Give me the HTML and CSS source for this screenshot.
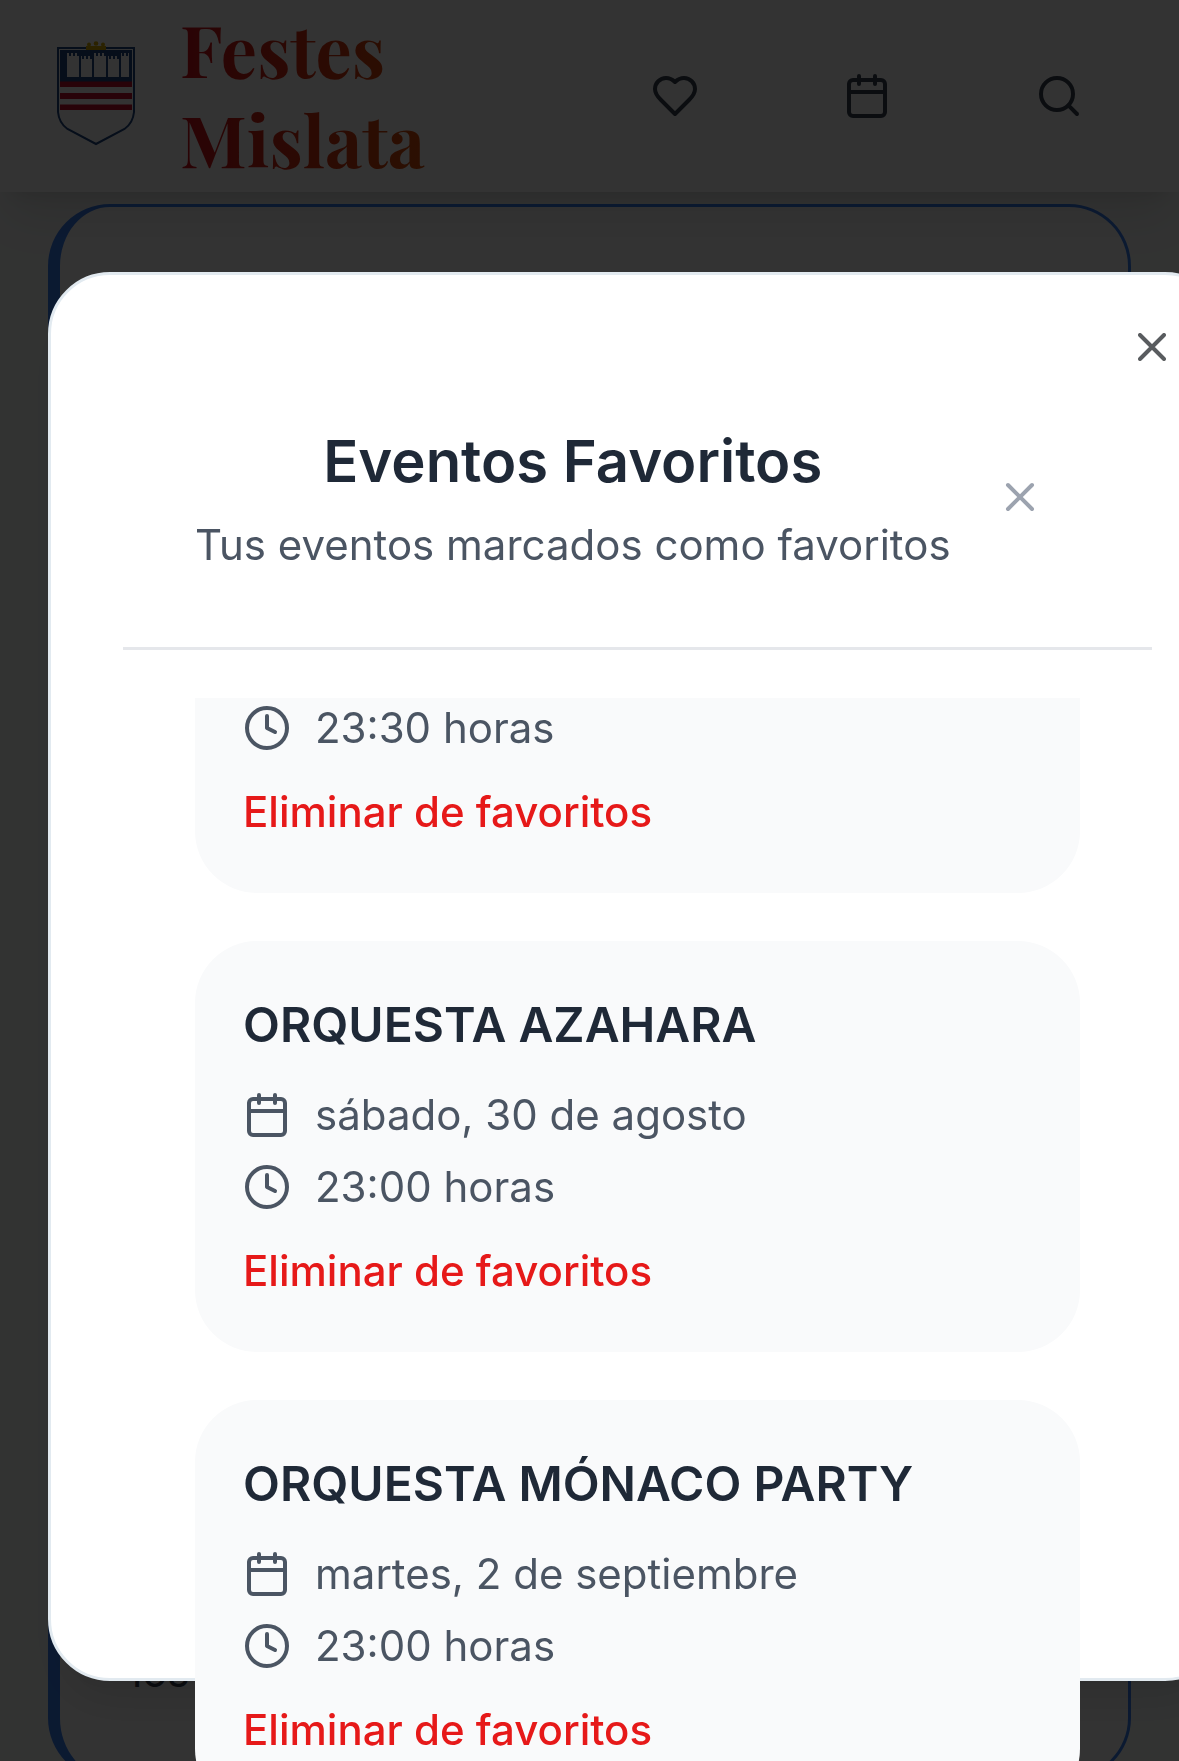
FILE: index.html
```html
<!DOCTYPE html>
<html lang="es">
<head>
<meta charset="utf-8">
<meta name="viewport" content="width=device-width, initial-scale=1">
<title>Festes Mislata</title>
<link rel="stylesheet" href="styles.css">
</head>
<body>
<svg class="sprite" aria-hidden="true">
  <symbol id="calendar" viewBox="0 0 24 24"><path d="M8 2v4M16 2v4M3 10h18"/><rect x="3" y="4" width="18" height="18" rx="2"/></symbol>
  <symbol id="clock" viewBox="0 0 24 24"><circle cx="12" cy="12" r="10"/><path d="M12 6v6l4 2"/></symbol>
  <symbol id="close" viewBox="0 0 24 24"><path d="M18 6 6 18M6 6l12 12"/></symbol>
  <symbol id="heart" viewBox="0 0 24 24"><path d="M19 14c1.49-1.46 3-3.21 3-5.5A5.5 5.5 0 0 0 16.5 3c-1.76 0-3 .5-4.5 2-1.5-1.5-2.74-2-4.5-2A5.5 5.5 0 0 0 2 8.500c0 2.300 1.500 4.050 3 5.500l7 7Z"/></symbol>
  <symbol id="search" viewBox="0 0 24 24"><circle cx="11" cy="11" r="8"/><path d="m21 21-4.300-4.300"/></symbol>
</svg>

<header class="site-header">
  <a class="brand" href="#">
    <svg class="crest" viewBox="0 0 96 120" aria-hidden="true">
      <path d="M10 12H86V76Q85 87 76.500 93L48 108 19.500 93Q11 87 10 76Z" fill="#fff" stroke="#1e4580" stroke-width="2"/>
      <path d="M12 14H84V46H12Z" fill="#1e4580"/>
      <path d="M19 17h2v3h2v-3h2v3h2v-3h2v3h2v21H19Z M33 20h1v3h2v-3h2v3h2v-3h2v3h2v18H33Z M46 17h2v3h2v-3h2v3h2v-3h2v3h2v21H46Z M60 20h1v3h2v-3h2v3h2v-3h2v3h2v18H60Z M73 17h1v3h2v-3h2v3h2v-3h1v24h-8Z" fill="#fff"/>
      <path d="M12 45.500H84v5.500H12Z M12 57H84v6H12Z M12 68.500H84v5.500H12Z" fill="#c8102e"/>
      <path d="M38 10h20v4H38Z" fill="#d4a800"/>
      <circle cx="41" cy="8.500" r="2" fill="#d4a800"/><circle cx="48" cy="7.500" r="2.300" fill="#d4a800"/><circle cx="55" cy="8.500" r="2" fill="#d4a800"/>
    </svg>
    <span class="brand-name">Festes<br>Mislata</span>
  </a>
  <nav class="actions">
    <button class="action" aria-label="Favoritos"><svg class="icon"><use href="#heart"/></svg></button>
    <button class="action" aria-label="Calendario"><svg class="icon"><use href="#calendar"/></svg></button>
    <button class="action" aria-label="Buscar"><svg class="icon"><use href="#search"/></svg></button>
  </nav>
</header>

<main class="page">
  <article class="event"><p class="event-text">los</p></article>
</main>

<div class="overlay">
  <section class="dialog" role="dialog" aria-modal="true" aria-labelledby="dialog-title">
    <button class="dialog-close" aria-label="Cerrar"><svg class="icon"><use href="#close"/></svg></button>
    <header class="dialog-header">
      <div class="heading">
        <h2 class="dialog-title" id="dialog-title">Eventos Favoritos</h2>
        <p class="subtitle">Tus eventos marcados como favoritos</p>
      </div>
      <button class="header-close" aria-label="Cerrar favoritos"><svg class="icon"><use href="#close"/></svg></button>
    </header>
    <ul class="favorites">
      <li class="favorite favorite-continued">
        <p class="detail"><svg class="icon"><use href="#clock"/></svg>23:30 horas</p>
        <button class="remove">Eliminar de favoritos</button>
      </li>
      <li class="favorite">
        <h3 class="favorite-name">ORQUESTA AZAHARA</h3>
        <p class="detail"><svg class="icon"><use href="#calendar"/></svg>sábado, 30 de agosto</p>
        <p class="detail"><svg class="icon"><use href="#clock"/></svg>23:00 horas</p>
        <button class="remove">Eliminar de favoritos</button>
      </li>
      <li class="favorite">
        <h3 class="favorite-name">ORQUESTA MÓNACO PARTY</h3>
        <p class="detail"><svg class="icon"><use href="#calendar"/></svg>martes, 2 de septiembre</p>
        <p class="detail"><svg class="icon"><use href="#clock"/></svg>23:00 horas</p>
        <button class="remove">Eliminar de favoritos</button>
      </li>
    </ul>
  </section>
</div>
</body>
</html>
```
FILE: styles.css
```css
:root {
  --radius: 62px;
  --shadow: 0 30px 45px -9px rgba(0, 0, 0, 0.1), 0 12px 18px -12px rgba(0, 0, 0, 0.1);
}

* {
  box-sizing: border-box;
  margin: 0;
  padding: 0;
}

body {
  height: 100vh;
  overflow: hidden;
  background: #fafcfb;
  color: #374151;
  font-family: Inter, "Liberation Sans", sans-serif;
  font-size: 42px;
  line-height: 60px;
}

button {
  border: 0;
  background: none;
  color: inherit;
  font: inherit;
  cursor: pointer;
}

.sprite {
  position: absolute;
  width: 0;
  height: 0;
}

.icon {
  display: block;
  flex: none;
  width: 48px;
  height: 48px;
  fill: none;
  stroke: currentColor;
  stroke-width: 2;
  stroke-linecap: round;
  stroke-linejoin: round;
}

/* Site header */
.site-header {
  position: relative;
  display: flex;
  align-items: center;
  justify-content: space-between;
  padding: 3px 48px;
  background: #fff;
  box-shadow: var(--shadow);
}

.brand {
  display: flex;
  align-items: center;
  gap: 36px;
  text-decoration: none;
}

.crest {
  width: 96px;
  height: 120px;
}

.brand-name {
  display: block;
  padding-bottom: 6px;
  background: linear-gradient(90deg, #d0101c, #d9500a);
  background-clip: text;
  color: transparent;
  font-family: "Playfair Display", "Liberation Serif", serif;
  font-size: 72px;
  font-weight: 700;
  line-height: 90px;
}

.actions {
  display: flex;
  gap: 48px;
}

.action {
  display: flex;
  justify-content: center;
  padding: 48px;
}

/* Page behind the dialog */
.page {
  padding: 12px 48px;
}

.event {
  display: flex;
  flex-direction: column;
  justify-content: flex-end;
  min-height: calc(100vh - 185px);
  padding: 75px 72px;
  border: 3px solid #3b82f6;
  border-left-width: 12px;
  border-radius: var(--radius);
  background: #fff;
}

/* Favourites dialog */
.overlay {
  position: fixed;
  inset: 0;
  display: flex;
  align-items: center;
  padding: 192px 0 0 48px;
  overflow: hidden;
  background: rgba(0, 0, 0, 0.8);
}

.dialog {
  position: relative;
  flex: none;
  width: 100vw;
  height: 80vh;
  padding: 72px;
  border: 3px solid #e2eaf0;
  border-radius: var(--radius);
  background: #fff;
  box-shadow: var(--shadow);
}

.dialog-close {
  position: absolute;
  top: 48px;
  right: 48px;
  color: #14181c;
  opacity: 0.7;
}

.dialog-header {
  display: flex;
  align-items: center;
  justify-content: space-between;
  padding: 72px;
  border-bottom: 3px solid #e5e7eb;
}

.heading {
  display: grid;
  gap: 12px;
  text-align: center;
}

.dialog-title {
  color: #1f2937;
  font-size: 58px;
  font-weight: 600;
  line-height: 84px;
}

.subtitle {
  color: #4b5563;
}

.header-close {
  padding: 36px;
  color: #9ca3af;
}

.favorites {
  display: grid;
  gap: 48px;
  padding: 48px 72px;
  list-style: none;
}

.favorite {
  padding: 48px 48px 51px;
  border-radius: var(--radius);
  background: #f9fafb;
}

/* Entry scrolled partly past the top of the list */
.favorite-continued {
  padding-top: 0;
  border-top-left-radius: 0;
  border-top-right-radius: 0;
}

.favorite-name {
  margin-bottom: 24px;
  color: #1f2937;
  font-size: 48px;
  font-weight: 600;
  line-height: 72px;
}

.detail {
  display: flex;
  align-items: center;
  gap: 24px;
  color: #4b5563;
}

.detail + .detail {
  margin-top: 12px;
}

.remove {
  display: block;
  margin-top: 24px;
  color: #e61919;
  font-weight: 500;
}
```
